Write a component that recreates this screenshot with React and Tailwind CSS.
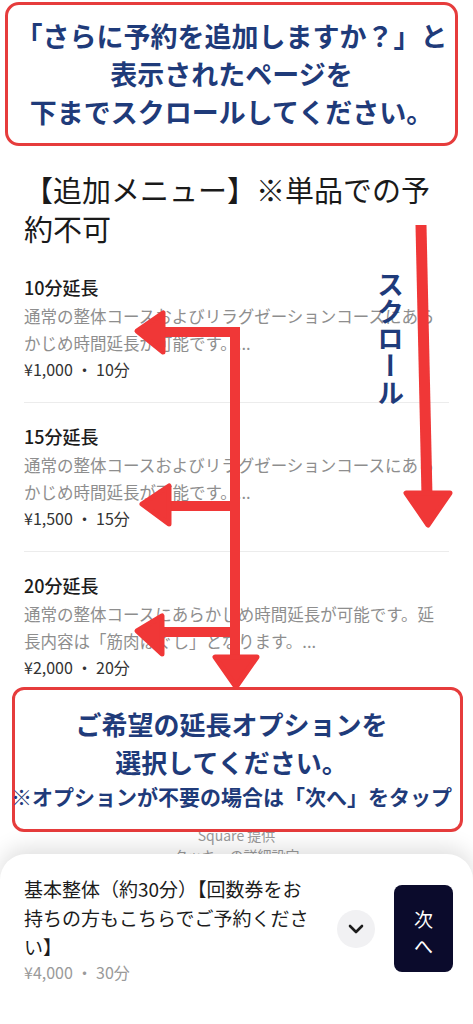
import React from 'react';

const items = [
  {
    title: '10分延長',
    desc: '通常の整体コースおよびリラグゼーションコースにあらかじめ時間延長が可能です。...',
    price: '¥1,000 ・ 10分',
  },
  {
    title: '15分延長',
    desc: '通常の整体コースおよびリラグゼーションコースにあらかじめ時間延長が可能です。...',
    price: '¥1,500 ・ 15分',
  },
  {
    title: '20分延長',
    desc: '通常の整体コースにあらかじめ時間延長が可能です。延長内容は「筋肉ほぐし」となります。...',
    price: '¥2,000 ・ 20分',
  },
];

function Arrows() {
  const red = '#f03737';
  return (
    <svg className="absolute inset-0 z-20 pointer-events-none" width="473" height="1024" viewBox="0 0 473 1024">
      {/* right scroll arrow */}
      <line x1="421" y1="225" x2="427" y2="496" stroke={red} strokeWidth="11" />
      <polygon points="406,493 450,493 428,525" fill={red} stroke={red} strokeWidth="5" strokeLinejoin="round" />

      {/* tree arrow */}
      <line x1="235" y1="327" x2="235" y2="660" stroke={red} strokeWidth="10" />
      <line x1="240" y1="332" x2="160" y2="332" stroke={red} strokeWidth="10" />
      <polygon points="163,313 163,352 137,331" fill={red} stroke={red} strokeWidth="5" strokeLinejoin="round" />
      <line x1="240" y1="506" x2="165" y2="506" stroke={red} strokeWidth="10" />
      <polygon points="169,486 169,524 142,504" fill={red} stroke={red} strokeWidth="5" strokeLinejoin="round" />
      <line x1="240" y1="632" x2="160" y2="632" stroke={red} strokeWidth="10" />
      <polygon points="162,616 162,654 137,631" fill={red} stroke={red} strokeWidth="5" strokeLinejoin="round" />
      <polygon points="215,657 257,657 236,687" fill={red} stroke={red} strokeWidth="5" strokeLinejoin="round" />
    </svg>
  );
}

export default function App() {
  return (
    <div className="relative w-[473px] h-[1024px] overflow-hidden bg-white font-['Noto_Sans_CJK_JP',sans-serif]">
      {/* top note */}
      <div className="mt-[2px] ml-[5px] w-[453px] h-[144px] border-[3px] border-[#e63c3c] rounded-[14px] bg-white flex flex-col items-center justify-center text-[27px] leading-[38px] font-bold text-[#1f3b7a]">
        <p>「さらに予約を追加しますか？」と</p>
        <p>表示されたページを</p>
        <p>下までスクロールしてください。</p>
      </div>

      <h1 className="mt-[24px] px-6 text-[29px] leading-[39px] font-normal text-[#1a1a1a]">
        【追加メニュー】※単品での予約不可
      </h1>

      <div className="mt-[6px] px-6">
        {items.map((item, i) => (
          <div key={i} className={`pt-[20px] ${i < items.length - 1 ? 'pb-[21px] border-b border-[#ececec]' : ''}`}>
            <p className="text-[18px] leading-[26px] font-medium text-[#1c1c1c]">{item.title}</p>
            <p className="mt-[3px] text-[16.5px] leading-[27px] text-[#8e8e8e] line-clamp-2">{item.desc}</p>
            <p className="text-[16px] leading-[24px] text-[#333333]">{item.price}</p>
          </div>
        ))}
      </div>

      {/* bottom note */}
      <div className="relative z-10 mt-[8px] ml-[12px] w-[451px] h-[145px] border-[3px] border-[#e63c3c] rounded-[12px] bg-white flex flex-col items-center pt-[15px] pr-[12px] font-bold text-[#1f3b7a]">
        <p className="text-[26px] leading-[38px]">ご希望の延長オプションを</p>
        <p className="text-[26px] leading-[38px]">選択してください。</p>
        <p className="-mx-[6px] text-[21px] leading-[30px] whitespace-nowrap">※オプションが不要の場合は「次へ」をタップ</p>
      </div>

      <div className="-mt-[7px] text-center text-[14px] leading-[20px] text-[#9a9a9a]">
        <p>Square 提供</p>
        <p>クッキーの詳細設定</p>
      </div>

      <Arrows />

      <div className="absolute left-[377px] top-[271px] z-20 [writing-mode:vertical-rl] text-[27px] leading-[27px] font-bold text-[#1f3b7a]">
        スクロール
      </div>

      {/* bottom sheet */}
      <div className="absolute bottom-0 left-0 right-0 z-30 h-[170px] bg-white rounded-t-[26px] shadow-[0_-6px_22px_rgba(0,0,0,0.13)]">
        <div className="flex items-center pt-[20px] pl-6 pr-[20px]">
          <div className="w-[296px]">
            <p className="text-[19px] leading-[29px] text-[#1c1c1c]">基本整体（約30分）【回数券をお持ちの方もこちらでご予約ください】</p>
            <p className="text-[16px] leading-[22px] text-[#9a9a9a]">¥4,000 ・ 30分</p>
          </div>
          <button className="ml-[17px] w-[38px] h-[38px] rounded-full bg-[#f1f1f3] flex items-center justify-center">
            <svg width="16" height="10" viewBox="0 0 16 10" fill="none">
              <polyline points="2,2 8,8 14,2" stroke="#1c1c1c" strokeWidth="2.6" strokeLinecap="round" strokeLinejoin="round" />
            </svg>
          </button>
          <button className="ml-[19px] w-[59px] h-[87px] rounded-[8px] bg-[#0b0b2c] text-white text-[19px] leading-[27px] flex flex-col items-center justify-center pt-[6px]">
            <span>次</span>
            <span>へ</span>
          </button>
        </div>
      </div>
    </div>
  );
}
